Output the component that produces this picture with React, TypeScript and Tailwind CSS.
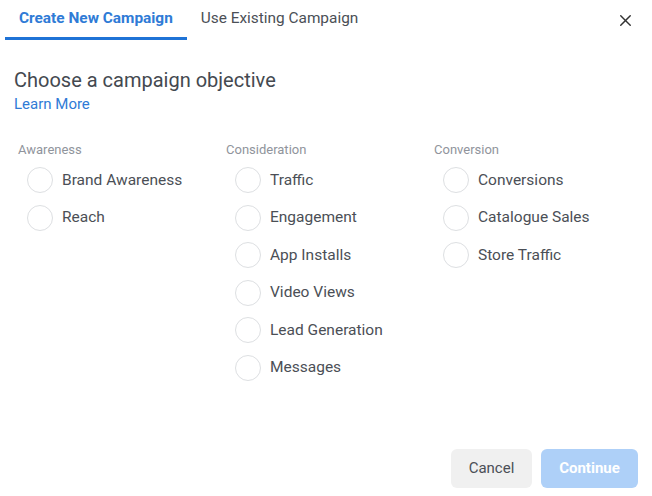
import { X } from 'lucide-react';

const columns = [
  { title: 'Awareness', items: ['Brand Awareness', 'Reach'] },
  {
    title: 'Consideration',
    items: ['Traffic', 'Engagement', 'App Installs', 'Video Views', 'Lead Generation', 'Messages'],
  },
  { title: 'Conversion', items: ['Conversions', 'Catalogue Sales', 'Store Traffic'] },
];

const App = () => {
  return (
    <div className="flex h-[496px] w-[652px] flex-col bg-white font-['Roboto',sans-serif] text-[#4b4f56]">
      {/* Tabs */}
      <div className="flex h-[40px] items-start">
        <button className="ml-[5px] border-b-[3px] border-[#1f73d6] px-[14px] pt-[9px] pb-[10px] text-[15.4px] leading-[18px] font-bold text-[#2f7bd6]">
          Create New Campaign
        </button>
        <button className="px-[14px] pt-[9px] pb-[10px] text-[15.4px] leading-[18px] text-[#4b4f56]">
          Use Existing Campaign
        </button>
        <button className="mt-[6px] mr-[13px] ml-auto flex h-[28px] w-[28px] items-center justify-center text-[#333]">
          <X size={19} strokeWidth={1.8} />
        </button>
      </div>

      {/* Heading */}
      <div className="px-[14px]">
        <h2 className="mt-[28px] text-[20px] leading-[24px] text-[#444950]">
          Choose a campaign objective
        </h2>
        <a className="mt-[3px] block text-[15px] leading-[18px] text-[#2f7bd6]">Learn More</a>
      </div>

      {/* Objectives */}
      <div className="mt-[29px] grid grid-cols-[208px_208px_208px] pl-[18px]">
        {columns.map((col) => (
          <div key={col.title}>
            <div className="text-[13px] leading-[16px] text-[#90949c]">{col.title}</div>
            <div className="mt-[3.5px]">
              {col.items.map((item) => (
                <label key={item} className="flex h-[37.5px] items-center pl-[9px]">
                  <span className="h-[26px] w-[26px] shrink-0 rounded-full border border-[#dddfe2]" />
                  <span className="ml-[9px] text-[15.5px] text-[#4b4f56]">{item}</span>
                </label>
              ))}
            </div>
          </div>
        ))}
      </div>

      {/* Footer */}
      <div className="mt-auto flex justify-end gap-[9px] pr-[14px] pb-[8px]">
        <button className="h-[39px] w-[81px] rounded-[6px] bg-[#f0f0f0] text-[15px] text-[#4b4f56]">
          Cancel
        </button>
        <button className="h-[39px] w-[97px] rounded-[6px] bg-[#aed0f8] text-[15px] font-bold text-white">
          Continue
        </button>
      </div>
    </div>
  );
};

export default App;
